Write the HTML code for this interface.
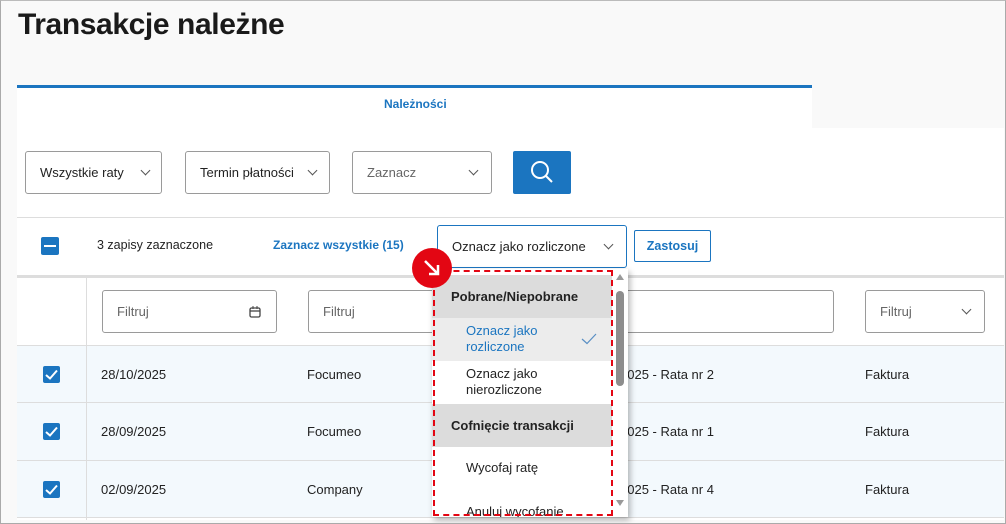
<!DOCTYPE html><html><head><meta charset="utf-8"><style>
*{box-sizing:border-box;margin:0;padding:0}
body{width:1006px;height:524px;overflow:hidden;font-family:"Liberation Sans",sans-serif;background:#f9f9f9;position:relative;color:#222}
.a{position:absolute}
.frame{left:0;top:0;width:1006px;height:524px;border:1px solid #aaa;border-top:1px solid #bbb;z-index:50;pointer-events:none}
.sel{position:absolute;height:43px;border:1px solid #9a9a9a;border-radius:3px;background:#fff;font-size:13px;display:flex;align-items:center;padding-left:14px}
.chev{position:absolute;width:7px;height:7px;border-right:1.2px solid #555;border-bottom:1.2px solid #555;transform:rotate(45deg)}
.hl{position:absolute;left:17px;width:987px;height:1px;background:#ddd}
.cb{position:absolute;left:43px;width:17px;height:17px;background:#1b75c0;border-radius:2px}
.cb svg{position:absolute;left:2px;top:3px}
.t{position:absolute;font-size:13px;color:#222}
.dd div.i{position:absolute;left:0;width:180px;font-size:13px}
</style></head><body>
<div class="a" style="left:18px;top:8px;font-size:30px;font-weight:bold;color:#1a1a1a;letter-spacing:-0.4px">Transakcje należne</div>
<div class="a" style="left:17px;top:85px;width:795px;height:3px;background:#1b75c0"></div>
<div class="a" style="left:17px;top:88px;width:795px;height:40px;background:#fff"></div>
<div class="a" style="left:17px;top:128px;width:987px;height:392px;background:#fff"></div>
<div class="a" style="left:384px;top:97px;font-size:12px;font-weight:bold;color:#1b75c0">Należności</div>

<div class="sel" style="left:25px;top:151px;width:137px">Wszystkie raty<div class="chev" style="left:116px;top:15px"></div></div>
<div class="sel" style="left:185px;top:151px;width:145px">Termin płatności<div class="chev" style="left:123px;top:15px"></div></div>
<div class="sel" style="left:352px;top:151px;width:140px;color:#666">Zaznacz<div class="chev" style="left:117px;top:15px"></div></div>
<div class="a" style="left:513px;top:151px;width:58px;height:43px;background:#1b75c0;border-radius:2px">
<svg width="58" height="43"><circle cx="27" cy="19" r="8" fill="none" stroke="#fff" stroke-width="2"/><line x1="33" y1="25" x2="39" y2="31" stroke="#fff" stroke-width="2"/></svg></div>

<div class="hl" style="top:217px"></div>
<div class="a" style="left:41px;top:237px;width:18px;height:18px;background:#1b75c0;border-radius:2px"><div class="a" style="left:3px;top:8px;width:12px;height:2px;background:#fff"></div></div>
<div class="t" style="left:97px;top:238px;font-size:12.5px">3 zapisy zaznaczone</div>
<div class="t" style="left:273px;top:238px;color:#1b75c0;font-weight:bold;font-size:12px">Zaznacz wszystkie (15)</div>
<div class="sel" style="left:437px;top:225px;width:190px;border-color:#1b75c0;height:43px">Oznacz jako rozliczone<div class="chev" style="left:167px;top:15px"></div></div>
<div class="a" style="left:634px;top:230px;width:77px;height:32px;border:1px solid #1b75c0;border-radius:2px;color:#1b75c0;font-weight:bold;font-size:12.5px;text-align:center;line-height:30px">Zastosuj</div>

<div class="a" style="left:17px;top:275px;width:987px;height:3px;background:#ddd"></div>
<div class="a" style="left:86px;top:278px;width:1px;height:242px;background:#ddd"></div>
<div class="sel" style="left:102px;top:290px;width:175px;height:43px;color:#666">Filtruj
<svg class="a" style="left:146px;top:15px" width="12" height="12"><rect x="1" y="2" width="10" height="9" rx="1.5" fill="none" stroke="#444" stroke-width="1.3"/><line x1="1" y1="5" x2="11" y2="5" stroke="#444" stroke-width="1.3"/><line x1="4" y1="0" x2="4" y2="3" stroke="#444"/><line x1="8" y1="0" x2="8" y2="3" stroke="#444"/></svg></div>
<div class="sel" style="left:308px;top:290px;width:526px;height:43px;color:#666">Filtruj</div>
<div class="sel" style="left:865px;top:290px;width:120px;height:43px;color:#666">Filtruj<div class="chev" style="left:97px;top:15px"></div></div>
<div class="hl" style="top:345px"></div>

<div class="a" style="left:17px;top:346px;width:987px;height:171px;background:#f3f9fd"></div>
<div class="a" style="left:86px;top:346px;width:1px;height:174px;background:#ddd"></div>
<div class="hl" style="top:402px"></div><div class="hl" style="top:460px"></div><div class="hl" style="top:517px"></div>

<div class="cb" style="top:366px"><svg width="13" height="11"><path d="M1 6 L5 9.5 L12 1.5" fill="none" stroke="#fff" stroke-width="2"/></svg></div>
<div class="cb" style="top:423px"><svg width="13" height="11"><path d="M1 6 L5 9.5 L12 1.5" fill="none" stroke="#fff" stroke-width="2"/></svg></div>
<div class="cb" style="top:481px"><svg width="13" height="11"><path d="M1 6 L5 9.5 L12 1.5" fill="none" stroke="#fff" stroke-width="2"/></svg></div>
<div class="t" style="left:101px;top:367px">28/10/2025</div><div class="t" style="left:307px;top:367px">Focumeo</div><div class="t" style="left:620px;top:367px">2025 - Rata nr 2</div><div class="t" style="left:865px;top:367px">Faktura</div>
<div class="t" style="left:101px;top:424px">28/09/2025</div><div class="t" style="left:307px;top:424px">Focumeo</div><div class="t" style="left:620px;top:424px">2025 - Rata nr 1</div><div class="t" style="left:865px;top:424px">Faktura</div>
<div class="t" style="left:101px;top:482px">02/09/2025</div><div class="t" style="left:307px;top:482px">Company</div><div class="t" style="left:620px;top:482px">2025 - Rata nr 4</div><div class="t" style="left:865px;top:482px">Faktura</div>

<div class="a dd" style="left:432px;top:269px;width:196px;height:248px;background:#fff;box-shadow:2px 3px 6px rgba(0,0,0,.3);overflow:hidden">
<div class="i" style="top:6px;height:43px;background:#dcdcdc;padding:14px 0 0 19px;font-weight:bold;color:#222">Pobrane/Niepobrane</div>
<div class="i" style="top:49px;height:43px;background:#ececec;padding:5px 0 0 34px;color:#1b75c0;line-height:16px">Oznacz jako<br>rozliczone
<svg class="a" style="left:149px;top:15px" width="16" height="12"><path d="M1 6 L6 10.5 L15 1" fill="none" stroke="#5a8fc4" stroke-width="1.2"/></svg></div>
<div class="i" style="top:92px;height:43px;background:#fff;padding:5px 0 0 34px;line-height:16px">Oznacz jako<br>nierozliczone</div>
<div class="i" style="top:135px;height:43px;background:#dcdcdc;padding:14px 0 0 19px;font-weight:bold">Cofnięcie transakcji</div>
<div class="i" style="top:191px;padding-left:34px">Wycofaj ratę</div>
<div class="i" style="top:235px;padding-left:34px">Anuluj wycofanie</div>
<div class="a" style="left:181px;top:0;width:15px;height:248px;background:#fff"></div>
<div class="a" style="left:184px;top:5px;width:0;height:0;border-left:4px solid transparent;border-right:4px solid transparent;border-bottom:6px solid #999"></div>
<div class="a" style="left:184px;top:22px;width:8px;height:95px;background:#8d8d8d;border-radius:4px"></div>
<div class="a" style="left:184px;top:231px;width:0;height:0;border-left:4px solid transparent;border-right:4px solid transparent;border-top:6px solid #999"></div>
</div>
<div class="a" style="left:433px;top:270px;width:180px;height:246px;border:2px dashed #e30613"></div>
<div class="a" style="left:412px;top:248px;width:40px;height:40px;border-radius:50%;background:#e30613">
<svg width="40" height="40"><path d="M13 13 L26 26 M17 26 L26 26 L26 17" fill="none" stroke="#fff" stroke-width="2.5"/></svg></div>
<div class="a frame"></div>
</body></html>
